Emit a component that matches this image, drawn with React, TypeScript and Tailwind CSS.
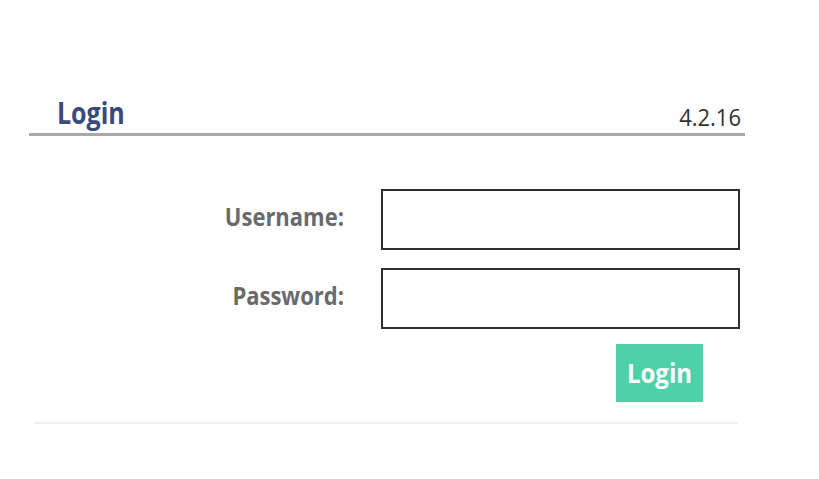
const font = { fontFamily: '"Open Sans", "Noto Sans", sans-serif' };

const Field = ({ label, type }: { label: string; type: string }) => (
  <div className="flex flex-row items-center">
    <label className="w-[316px] pr-[1px] pb-[7px] text-right text-[22px] font-bold text-[#6a6a6a]">
      <span className="inline-block scale-y-[1.1]">{label}</span>
    </label>
    <input
      type={type}
      className="ml-[36px] w-[359px] h-[61px] border-2 border-[#2f2f2f] bg-white outline-none"
    />
  </div>
);

const App = () => {
  return (
    <div style={font} className="w-[819px] h-[479px] bg-white pt-[96px]">
      <div className="ml-[29px] w-[716px]">
        <div className="flex flex-row items-end justify-between h-[40px] border-b-[3px] border-[#a8a8a8] pl-[28px] pr-[4px] pb-[5px]">
          <p className="inline-block origin-bottom scale-y-[1.2] text-[25px] leading-none font-bold text-[#3a4a7c]">Login</p>
          <p className="inline-block origin-bottom scale-y-[1.05] text-[22px] leading-none text-[#333]">4.2.16</p>
        </div>

        <div className="mt-[53px] flex flex-col gap-[18px]">
          <Field label="Username:" type="text" />
          <Field label="Password:" type="password" />
        </div>

        <div className="mt-[15px] ml-[587px]">
          <button className="w-[87px] h-[58px] bg-[#4fd1a8] text-white text-[24px] font-bold">
            <span className="inline-block scale-y-[1.1]">Login</span>
          </button>
        </div>

        <div className="mt-[20px] ml-[6px] w-[703px] h-[2px] bg-[#efefef]" />
      </div>
    </div>
  );
};

export default App;
